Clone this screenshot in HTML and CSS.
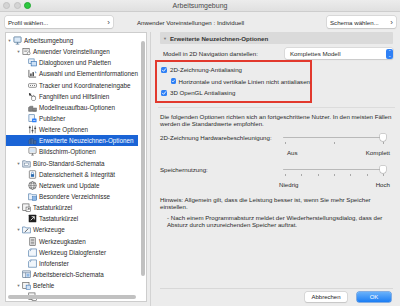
FILE: index.html
```html
<!DOCTYPE html>
<html lang="de">
<head>
  <meta charset="UTF-8">
  <title>Arbeitsumgebung</title>
  <link rel="stylesheet" href="styles.css">
</head>
<body>
  <svg class="defs" width="0" height="0">
    <symbol id="i-monitor" viewBox="0 0 10 10"><rect x="1" y="1" width="8" height="6" rx="0.5" fill="#dbe9f7" stroke="#4a6f93" stroke-width="0.8"/><path d="M3 9h4M5 7v2" stroke="#4a6f93" stroke-width="0.8"/></symbol>
    <symbol id="i-prefs" viewBox="0 0 10 10"><rect x="1" y="1.5" width="7" height="7" fill="#f4f4f4" stroke="#555" stroke-width="0.7"/><path d="M2.5 3.5h4M2.5 5h3" stroke="#777" stroke-width="0.6"/><circle cx="7.5" cy="7" r="1.6" fill="#fff" stroke="#555" stroke-width="0.6"/></symbol>
    <symbol id="i-dialog" viewBox="0 0 10 10"><rect x="0.8" y="1" width="6" height="5" fill="#eaf2fb" stroke="#4a78a8" stroke-width="0.7"/><rect x="3.5" y="3.8" width="6" height="5" fill="#cfe2f6" stroke="#2d6bb0" stroke-width="0.7"/></symbol>
    <symbol id="i-select" viewBox="0 0 10 10"><path d="M1 1v8h8" fill="none" stroke="#333" stroke-width="0.8"/><rect x="2.5" y="5" width="1.5" height="3" fill="#333"/><rect x="5" y="3.5" width="1.5" height="4.5" fill="#333"/><path d="M7.5 2l2 2.5-1 0.3" fill="#2d6bb0"/></symbol>
    <symbol id="i-tracker" viewBox="0 0 10 10"><rect x="0.6" y="3" width="8.8" height="4" rx="0.8" fill="#fff" stroke="#555" stroke-width="0.7"/><path d="M2.3 5h1M4.5 5h1M6.7 5h1" stroke="#333" stroke-width="0.8"/></symbol>
    <symbol id="i-snap" viewBox="0 0 10 10"><path d="M1 1l3 1.2-1.2 0.6 1.5 1.5-0.6 0.6-1.5-1.5-0.6 1.2z" fill="#222"/><path d="M4 5.5c0-1 1.5-1 1.5 0v-1c0-1 1.5-1 1.5 0v1c0-0.8 1.4-0.8 1.4 0v2.2c0 1-0.8 1.8-1.8 1.8h-1.2c-1 0-1.4-0.8-1.4-1.8z" fill="#fff" stroke="#444" stroke-width="0.6"/></symbol>
    <symbol id="i-rebuild" viewBox="0 0 10 10"><path d="M0.5 9V5l2-1.5V9M3 9V3.5h2.5V9M6 9V5.5h3.5V9z" fill="#8a8a8a" stroke="#444" stroke-width="0.4"/><path d="M0.5 9.3h9" stroke="#333" stroke-width="0.6"/></symbol>
    <symbol id="i-publisher" viewBox="0 0 10 10"><rect x="1" y="0.8" width="6" height="7.5" fill="#eef4fb" stroke="#4a78a8" stroke-width="0.7"/><rect x="4.5" y="5" width="5" height="4.2" rx="0.6" fill="#2d7ff9"/><path d="M5.7 7.2h2.6" stroke="#fff" stroke-width="0.7"/></symbol>
    <symbol id="i-sliders" viewBox="0 0 10 10"><path d="M2 0.8v8.4M5 0.8v8.4M8 0.8v8.4" stroke="#444" stroke-width="0.7"/><rect x="1" y="2" width="2" height="1.5" fill="#444"/><rect x="4" y="5.5" width="2" height="1.5" fill="#444"/><rect x="7" y="3" width="2" height="1.5" fill="#444"/></symbol>
    <symbol id="i-redraw" viewBox="0 0 10 10"><path d="M1 9V4.5l2-1.5V9M3.5 9V3h2.5V9M6.5 9V5h2.5V9z" fill="#4c6fa0" stroke="#24426b" stroke-width="0.4"/></symbol>
    <symbol id="i-screen" viewBox="0 0 10 10"><rect x="1" y="0.8" width="8" height="6.2" rx="0.5" fill="#fff" stroke="#555" stroke-width="0.7"/><rect x="2.2" y="2" width="5.6" height="3.8" fill="#d8e6f4"/><path d="M3.5 9h3M5 7v2" stroke="#555" stroke-width="0.7"/></symbol>
    <symbol id="i-office" viewBox="0 0 10 10"><path d="M0.8 2h3l0.8 1h4.6v6H0.8z" fill="#e8eef6" stroke="#4d6987" stroke-width="0.7"/><rect x="2.5" y="4.5" width="5" height="3" fill="#fff" stroke="#4d6987" stroke-width="0.5"/></symbol>
    <symbol id="i-safety" viewBox="0 0 10 10"><rect x="1.5" y="0.8" width="7" height="8.4" rx="0.6" fill="#fff" stroke="#555" stroke-width="0.7"/><rect x="3.2" y="4.6" width="3.6" height="3" fill="#2d6bb0"/><path d="M3.8 4.6V3.6a1.2 1.2 0 0 1 2.4 0v1" fill="none" stroke="#2d6bb0" stroke-width="0.6"/></symbol>
    <symbol id="i-globe" viewBox="0 0 10 10"><circle cx="5" cy="5" r="4.2" fill="#fff" stroke="#444" stroke-width="0.7"/><ellipse cx="5" cy="5" rx="1.8" ry="4.2" fill="none" stroke="#444" stroke-width="0.6"/><path d="M0.8 5h8.4M1.5 3h7M1.5 7h7" stroke="#444" stroke-width="0.5"/></symbol>
    <symbol id="i-folder" viewBox="0 0 10 10"><path d="M0.6 2h3l0.8 1h5v5.6H0.6z" fill="#eaf2fb" stroke="#4a78a8" stroke-width="0.7"/><rect x="5" y="5.2" width="4.4" height="4" fill="#8fb8e6" stroke="#2d6bb0" stroke-width="0.5"/></symbol>
    <symbol id="i-keys" viewBox="0 0 10 10"><rect x="0.8" y="1" width="7" height="7.5" fill="#f4f4f4" stroke="#555" stroke-width="0.7"/><rect x="4.5" y="4.5" width="5" height="5" fill="#fff" stroke="#444" stroke-width="0.6"/><path d="M6 8l2-2M6.5 6H8v1.5" fill="none" stroke="#222" stroke-width="0.6"/></symbol>
    <symbol id="i-shortcut" viewBox="0 0 10 10"><rect x="0.8" y="0.8" width="8.4" height="8.4" rx="0.6" fill="#1e1e1e"/><path d="M3 7l4-4M4 3h3v3" fill="none" stroke="#fff" stroke-width="0.9"/></symbol>
    <symbol id="i-tools" viewBox="0 0 10 10"><path d="M0.6 2.2h3l0.8 1h5v5.6H0.6z" fill="#f1f6fb" stroke="#4a78a8" stroke-width="0.7"/><path d="M3 8l4-4" stroke="#333" stroke-width="0.8"/></symbol>
    <symbol id="i-toolbox" viewBox="0 0 10 10"><rect x="2" y="0.8" width="6" height="8.4" fill="#fff" stroke="#444" stroke-width="0.7"/><path d="M3 2.5h4M3 4.2h4M3 5.9h4M3 7.6h4" stroke="#444" stroke-width="0.7"/></symbol>
    <symbol id="i-toolwin" viewBox="0 0 10 10"><path d="M0.6 3l2-2h6.8v8.2H0.6z" fill="#f1f6fb" stroke="#4a78a8" stroke-width="0.7"/><path d="M3.5 1l-1 2.5" stroke="#4a78a8" stroke-width="0.6"/></symbol>
    <symbol id="i-workspace" viewBox="0 0 10 10"><rect x="0.8" y="1" width="8.4" height="7.4" fill="#eef3f9" stroke="#4d6987" stroke-width="0.7"/><path d="M0.8 3h8.4M4 3v5.4" stroke="#4d6987" stroke-width="0.6"/><rect x="5" y="4" width="3.3" height="3.4" fill="#8fb8e6"/></symbol>
    <symbol id="i-commands" viewBox="0 0 10 10"><rect x="0.8" y="1.5" width="7" height="7" fill="#f4f4f4" stroke="#555" stroke-width="0.7"/><rect x="4.6" y="4.6" width="4.6" height="4.6" fill="#d2e3f5" stroke="#2d6bb0" stroke-width="0.6"/></symbol>
    <symbol id="i-check" viewBox="0 0 10 10"><path d="M2.3 5.2l2 2 3.6-4.4" fill="none" stroke="#fff" stroke-width="1.5" stroke-linecap="round" stroke-linejoin="round"/></symbol>
  </svg>

  <div class="window">
    <div class="titlebar">
      <div class="lights">
        <span class="light"></span>
        <span class="light"></span>
        <span class="light green"></span>
      </div>
      <div class="title">Arbeitsumgebung</div>
    </div>

    <div class="toolbar">
      <div class="pick profile"><span>Profil wählen...</span><span class="chev">›</span></div>
      <div class="current">Anwender Voreinstellungen : Individuell</div>
      <div class="pick schema"><span>Schema wählen...</span><span class="chev">›</span></div>
    </div>

    <div class="main">
      <div class="tree-panel">
        <ul class="tree">
          <li class="row lv0"><span class="twisty">▼</span><svg class="ico"><use href="#i-monitor"/></svg><span>Arbeitsumgebung</span></li>
          <li class="row lv1"><span class="twisty">▼</span><svg class="ico"><use href="#i-prefs"/></svg><span>Anwender Voreinstellungen</span></li>
          <li class="row lv2"><span class="twisty"></span><svg class="ico"><use href="#i-dialog"/></svg><span>Dialogboxen und Paletten</span></li>
          <li class="row lv2"><span class="twisty"></span><svg class="ico"><use href="#i-select"/></svg><span>Auswahl und Elementinformationen</span></li>
          <li class="row lv2"><span class="twisty"></span><svg class="ico"><use href="#i-tracker"/></svg><span>Tracker und Koordinateneingabe</span></li>
          <li class="row lv2"><span class="twisty"></span><svg class="ico"><use href="#i-snap"/></svg><span>Fanghilfen und Hilfslinien</span></li>
          <li class="row lv2"><span class="twisty"></span><svg class="ico"><use href="#i-rebuild"/></svg><span>Modellneuaufbau-Optionen</span></li>
          <li class="row lv2"><span class="twisty"></span><svg class="ico"><use href="#i-publisher"/></svg><span>Publisher</span></li>
          <li class="row lv2"><span class="twisty"></span><svg class="ico"><use href="#i-sliders"/></svg><span>Weitere Optionen</span></li>
          <li class="row lv2 selected"><span class="twisty"></span><svg class="ico"><use href="#i-redraw"/></svg><span>Erweiterte Neuzeichnen-Optionen</span></li>
          <li class="row lv2"><span class="twisty"></span><svg class="ico"><use href="#i-screen"/></svg><span>Bildschirm-Optionen</span></li>
          <li class="row lv1"><span class="twisty">▼</span><svg class="ico"><use href="#i-office"/></svg><span>Büro-Standard-Schemata</span></li>
          <li class="row lv2"><span class="twisty"></span><svg class="ico"><use href="#i-safety"/></svg><span>Datensicherheit &amp; Integrität</span></li>
          <li class="row lv2"><span class="twisty"></span><svg class="ico"><use href="#i-globe"/></svg><span>Netzwerk und Update</span></li>
          <li class="row lv2"><span class="twisty"></span><svg class="ico"><use href="#i-folder"/></svg><span>Besondere Verzeichnisse</span></li>
          <li class="row lv1"><span class="twisty">▼</span><svg class="ico"><use href="#i-keys"/></svg><span>Tastaturkürzel</span></li>
          <li class="row lv2"><span class="twisty"></span><svg class="ico"><use href="#i-shortcut"/></svg><span>Tastaturkürzel</span></li>
          <li class="row lv1"><span class="twisty">▼</span><svg class="ico"><use href="#i-tools"/></svg><span>Werkzeuge</span></li>
          <li class="row lv2"><span class="twisty"></span><svg class="ico"><use href="#i-toolbox"/></svg><span>Werkzeugkasten</span></li>
          <li class="row lv2"><span class="twisty"></span><svg class="ico"><use href="#i-toolwin"/></svg><span>Werkzeug Dialogfenster</span></li>
          <li class="row lv2"><span class="twisty"></span><svg class="ico"><use href="#i-toolwin"/></svg><span>Infofenster</span></li>
          <li class="row lv1"><span class="twisty"></span><svg class="ico"><use href="#i-workspace"/></svg><span>Arbeitsbereich-Schemata</span></li>
          <li class="row lv1"><span class="twisty">▼</span><svg class="ico"><use href="#i-commands"/></svg><span>Befehle</span></li>
          <li class="row lv2"><span class="twisty"></span><svg class="ico"><use href="#i-keys"/></svg><span></span></li>
        </ul>
        <div class="vscroll"></div>
        <div class="hscroll"></div>
      </div>

      <div class="settings">
        <div class="section-head"><span class="tri">▼</span>Erweiterte Neuzeichnen-Optionen</div>

        <div class="field">
          <span>Modell in 2D Navigation darstellen:</span>
          <div class="select">
            <span>Komplettes Modell</span>
            <span class="stepper">⌃<br>⌄</span>
          </div>
        </div>

        <div class="highlight">
          <label class="check"><svg class="box"><use href="#i-check"/></svg>2D-Zeichnung-Antialiasing</label>
          <label class="check sub"><svg class="box"><use href="#i-check"/></svg>Horizontale und vertikale Linien nicht antialiasen</label>
          <label class="check"><svg class="box"><use href="#i-check"/></svg>3D OpenGL Antialiasing</label>
        </div>

        <div class="rule"></div>

        <p class="note">Die folgenden Optionen richten sich an fortgeschrittene Nutzer. In den meisten Fällen werden die Standardwerte empfohlen.</p>

        <div class="slider-row">
          <span>2D-Zeichnung Hardwarebeschleunigung:</span>
          <div class="slider">
            <div class="track"></div>
            <div class="ticks"><i></i><i></i><i></i></div>
            <div class="thumb"></div>
          </div>
        </div>
        <div class="scale first"><span class="lo">Aus</span><span>Komplett</span></div>

        <div class="slider-row second">
          <span>Speichernutzung:</span>
          <div class="slider">
            <div class="track"></div>
            <div class="ticks"><i></i><i></i><i></i><i></i><i></i><i></i><i></i></div>
            <div class="thumb"></div>
          </div>
        </div>
        <div class="scale"><span>Niedrig</span><span>Hoch</span></div>

        <p class="note hint">Hinweis: Allgemein gilt, dass die Leistung besser ist, wenn Sie mehr Speicher einstellen.</p>
        <p class="note crash">- Nach einem Programmabsturz meldet der Wiederherstellungsdialog, dass der Absturz durch unzureichenden Speicher auftrat.</p>

        <div class="footer">
          <button class="btn">Abbrechen</button>
          <button class="btn ok">OK</button>
        </div>
      </div>
    </div>
  </div>
</body>
</html>
```

FILE: styles.css
```css
* {
  margin: 0;
  padding: 0;
  box-sizing: border-box;
}

body {
  width: 400px;
  height: 306px;
  overflow: hidden;
  background: #ececec;
  color: #2a2a2a;
  font-family: 'Liberation Sans', Arial, sans-serif;
  font-size: 6.15px;
}

.defs {
  position: absolute;
}

.window {
  height: 306px;
  display: flex;
  flex-direction: column;
}

/* title bar */

.titlebar {
  height: 12px;
  display: flex;
  align-items: center;
  background: linear-gradient(#ececec, #e0e0e0);
  border-bottom: 1px solid #cdcdcd;
}

.lights {
  display: flex;
  gap: 3.5px;
  padding-left: 3px;
}

.light {
  width: 7px;
  height: 7px;
  border-radius: 50%;
  background: #d4d4d4;
  border: 0.5px solid #c2c2c2;
}

.light.green {
  background: #2dc83f;
  border-color: #22a833;
}

.title {
  flex: 1;
  text-align: center;
  font-size: 7px;
  color: #4a4a4a;
  margin-right: 31px;
}

/* toolbar */

.toolbar {
  height: 20px;
  display: flex;
  align-items: center;
  padding: 0 4px 0 5px;
}

.pick {
  height: 12px;
  background: #fff;
  border-radius: 2px;
  box-shadow: 0 0 0 0.5px #c8c8c8, 0 0.5px 1px rgba(0,0,0,0.15);
  display: flex;
  align-items: center;
  justify-content: space-between;
  padding: 0 3px;
}

.profile {
  width: 108px;
}

.schema {
  width: 69px;
  margin-left: auto;
}

.chev {
  font-size: 8px;
  color: #444;
}

.current {
  margin-left: 24px;
}

/* main area */

.main {
  flex: 1;
  display: flex;
  min-height: 0;
}

.tree-panel {
  width: 142px;
  margin: 0 0 4px 5px;
  background: #fff;
  border: 1px solid #cdcdcd;
  position: relative;
  overflow: hidden;
}

.tree {
  list-style: none;
  padding-top: 2px;
}

.row {
  height: 11.15px;
  display: flex;
  align-items: center;
  white-space: nowrap;
  font-size: 6.3px;
  margin-right: 8px;
}

.row.lv1 { padding-left: 9px; }
.row.lv2 { padding-left: 15px; }

.twisty {
  width: 7px;
  font-size: 4px;
  color: #777;
  text-align: center;
}

.ico {
  width: 9px;
  height: 9px;
  margin-right: 2px;
  flex: none;
}

.row.selected {
  background: #1a64d6;
  color: #fff;
}

.vscroll {
  position: absolute;
  right: 1px;
  top: 8px;
  width: 4px;
  height: 235px;
  border-radius: 2px;
  background: #c1c1c1;
}

.hscroll {
  position: absolute;
  left: 2px;
  bottom: 2px;
  width: 128px;
  height: 4px;
  border-radius: 2px;
  background: #c1c1c1;
}

/* settings pane */

.settings {
  flex: 1;
  margin-left: 3px;
  border-left: 1px solid #d3d3d3;
  padding: 0 7px 0 9px;
  display: flex;
  flex-direction: column;
}

.section-head {
  height: 12px;
  background: #dadada;
  border-radius: 1px;
  display: flex;
  align-items: center;
  font-weight: bold;
  color: #333;
}

.section-head .tri {
  font-size: 4px;
  color: #777;
  width: 10px;
  padding-left: 3px;
}

.field {
  height: 11px;
  margin-top: 4px;
  display: flex;
  align-items: center;
  padding-left: 3px;
}

.select {
  margin-left: auto;
  width: 108px;
  height: 11px;
  background: #fff;
  border-radius: 2px;
  box-shadow: 0 0 0 0.5px #cbcbcb, 0 0.5px 1px rgba(0,0,0,0.15);
  display: flex;
  align-items: center;
  justify-content: space-between;
  padding-left: 5px;
}

.stepper {
  width: 7px;
  height: 10px;
  margin-right: 0.5px;
  border-radius: 2px;
  background: #2f80f5;
  color: #fff;
  font-size: 4px;
  line-height: 3.5px;
  text-align: center;
  padding-top: 1.5px;
}

.highlight {
  margin: 1px 0 0 -5px;
  width: 157px;
  height: 43px;
  border: 2px solid #e2392d;
  padding: 2px 0 0 4px;
}

.check {
  height: 11.5px;
  display: flex;
  align-items: center;
  gap: 3px;
  white-space: nowrap;
}

.check.sub {
  padding-left: 10px;
}

.box {
  width: 6px;
  height: 6px;
  border-radius: 1.5px;
  background: #2f80f5;
}

.rule {
  height: 1px;
  background: #dcdcdc;
  margin: 4px -2px 0 -2px;
}

.note {
  line-height: 7px;
  margin-top: 5px;
}

.slider-row {
  display: flex;
  align-items: center;
  height: 9px;
  margin-top: 6px;
}

.slider-row.second {
  margin-top: 9px;
}

.slider {
  margin-left: auto;
  margin-right: 7px;
  width: 103px;
  height: 9px;
  position: relative;
}

.track {
  position: absolute;
  left: 0;
  right: 0;
  top: 3.5px;
  height: 1.5px;
  border-radius: 1px;
  background: #b9b9b9;
}

.ticks {
  position: absolute;
  left: 2px;
  right: 2px;
  top: 9px;
  display: flex;
  justify-content: space-between;
}

.ticks i {
  width: 0.8px;
  height: 2px;
  background: #a9a9a9;
}

.thumb {
  position: absolute;
  right: 0;
  top: 0.5px;
  width: 6px;
  height: 7px;
  background: #fff;
  border-radius: 1px 1px 3px 3px;
  box-shadow: 0 0 0 0.5px #b3b3b3, 0 0.5px 1px rgba(0,0,0,0.25);
}

.scale {
  display: flex;
  justify-content: space-between;
  margin: 7px 3px 0 auto;
  width: 111px;
}

.scale.first {
  width: 107px;
}

.scale .lo {
  padding-left: 4px;
}

.hint {
  margin-top: 8px;
}

.crash {
  margin-top: 4px;
  padding-left: 7px;
}

.footer {
  margin-top: auto;
  border-top: 1px solid #d8d8d8;
  padding: 3px 2px 4px 0;
  display: flex;
  justify-content: flex-end;
  gap: 10px;
}

.btn {
  font-family: inherit;
  font-size: 6px;
  height: 10px;
  width: 42px;
  border: none;
  border-radius: 2px;
  background: #fff;
  color: #222;
  box-shadow: 0 0 0 0.5px #c6c6c6, 0 0.5px 1px rgba(0,0,0,0.15);
}

.btn.ok {
  width: 34px;
  color: #fff;
  background: linear-gradient(#69b1fa, #1b7df4);
  box-shadow: 0 0 0 0.5px #1a6fd8;
}
```
